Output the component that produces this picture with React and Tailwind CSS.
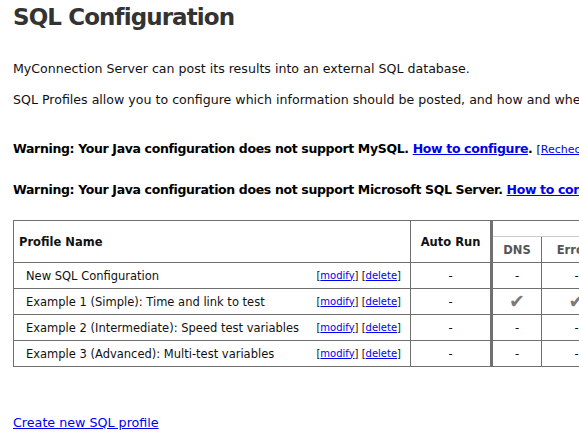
import React from "react";

const rows = [
  { name: "New SQL Configuration", dns: false, err: false },
  { name: "Example 1 (Simple): Time and link to test", dns: true, err: true },
  { name: "Example 2 (Intermediate): Speed test variables", dns: false, err: false },
  { name: "Example 3 (Advanced): Multi-test variables", dns: false, err: false },
];

function Mark({ on }) {
  return on ? (
    <span className="text-[19px] leading-none text-[#7a7a7a]">✔</span>
  ) : (
    <span>-</span>
  );
}

export default function App() {
  return (
    <div
      className="w-[579px] h-[441px] overflow-hidden bg-white text-[#111] whitespace-nowrap"
      style={{ fontFamily: '"DejaVu Sans", Verdana, sans-serif' }}
    >
      <div className="pl-[13px] w-[900px]">
        <h1 className="mt-[3px] text-[23px] leading-[28px] font-bold tracking-[-0.9px] text-[#333]">
          SQL Configuration
        </h1>

        <p className="mt-[30px] text-[12.6px] leading-[16px]">
          MyConnection Server can post its results into an external SQL database.
        </p>
        <p className="mt-[15px] text-[12.6px] leading-[16px]">
          SQL Profiles allow you to configure which information should be posted, and how and where it is posted.
        </p>

        <p className="mt-[33px] text-[12.5px] leading-[16px] font-bold tracking-[-0.35px] text-black">
          Warning: Your Java configuration does not support MySQL.{" "}
          <a href="#" className="text-[#0000ee] underline">How to configure</a>.{" "}
          <span className="font-normal text-[11px] tracking-normal">
            [<a href="#" className="text-[#0000ee] underline">Recheck</a>]
          </span>
        </p>
        <p className="mt-[24px] text-[12.5px] leading-[16px] font-bold tracking-[-0.35px] text-black">
          Warning: Your Java configuration does not support Microsoft SQL Server.{" "}
          <a href="#" className="text-[#0000ee] underline">How to configure</a>.{" "}
          <span className="font-normal text-[11px] tracking-normal">
            [<a href="#" className="text-[#0000ee] underline">Recheck</a>]
          </span>
        </p>

        <table className="mt-[21px] border-collapse table-fixed text-[11.5px] leading-[14px] w-[718px]">
          <colgroup>
            <col className="w-[397px]" />
            <col className="w-[81px]" />
            <col className="w-[50px]" />
            <col className="w-[70px]" />
            <col className="w-[60px]" />
            <col className="w-[60px]" />
          </colgroup>
          <thead>
            <tr className="h-[16px]">
              <th
                rowSpan={2}
                className="border border-[#707070] text-left font-bold pl-[5px] align-middle"
              >
                Profile Name
              </th>
              <th rowSpan={2} className="border border-[#707070] font-bold align-middle">
                Auto Run
              </th>
              <th
                colSpan={4}
                className="border-t border-r border-[#707070] border-l-[3px] border-l-[#707070] border-b border-b-[#cccccc] p-0"
              ></th>
            </tr>
            <tr className="h-[26px]">
              <th className="border border-[#707070] border-l-[3px] border-t-[#cccccc] font-bold text-[#555]">
                DNS
              </th>
              <th className="border border-[#707070] border-t-[#cccccc] font-bold text-[#555]">
                Errors
              </th>
              <th className="border border-[#707070] border-t-[#cccccc] font-bold text-[#555]">
                Speed
              </th>
              <th className="border border-[#707070] border-t-[#cccccc] font-bold text-[#555]">
                Link
              </th>
            </tr>
          </thead>
          <tbody>
            {rows.map((r) => (
              <tr key={r.name} className="h-[26px]">
                <td className="border border-[#707070] pl-[12px] pr-[9px]">
                  <div className="flex items-center justify-between">
                    <span>{r.name}</span>
                    <span className="text-[10px]">
                      [<a href="#" className="text-[#0000ee] underline">modify</a>]{" "}
                      [<a href="#" className="text-[#0000ee] underline">delete</a>]
                    </span>
                  </div>
                </td>
                <td className="border border-[#707070] text-center">-</td>
                <td className="border border-[#707070] border-l-[3px] text-center">
                  <Mark on={r.dns} />
                </td>
                <td className="border border-[#707070] text-center">
                  <Mark on={r.err} />
                </td>
                <td className="border border-[#707070] text-center">-</td>
                <td className="border border-[#707070] text-center">-</td>
              </tr>
            ))}
          </tbody>
        </table>

        <p className="mt-[48px] text-[12.7px] leading-[16px]">
          <a href="#" className="text-[#0000ee] underline">Create new SQL profile</a>
        </p>
      </div>
    </div>
  );
}
